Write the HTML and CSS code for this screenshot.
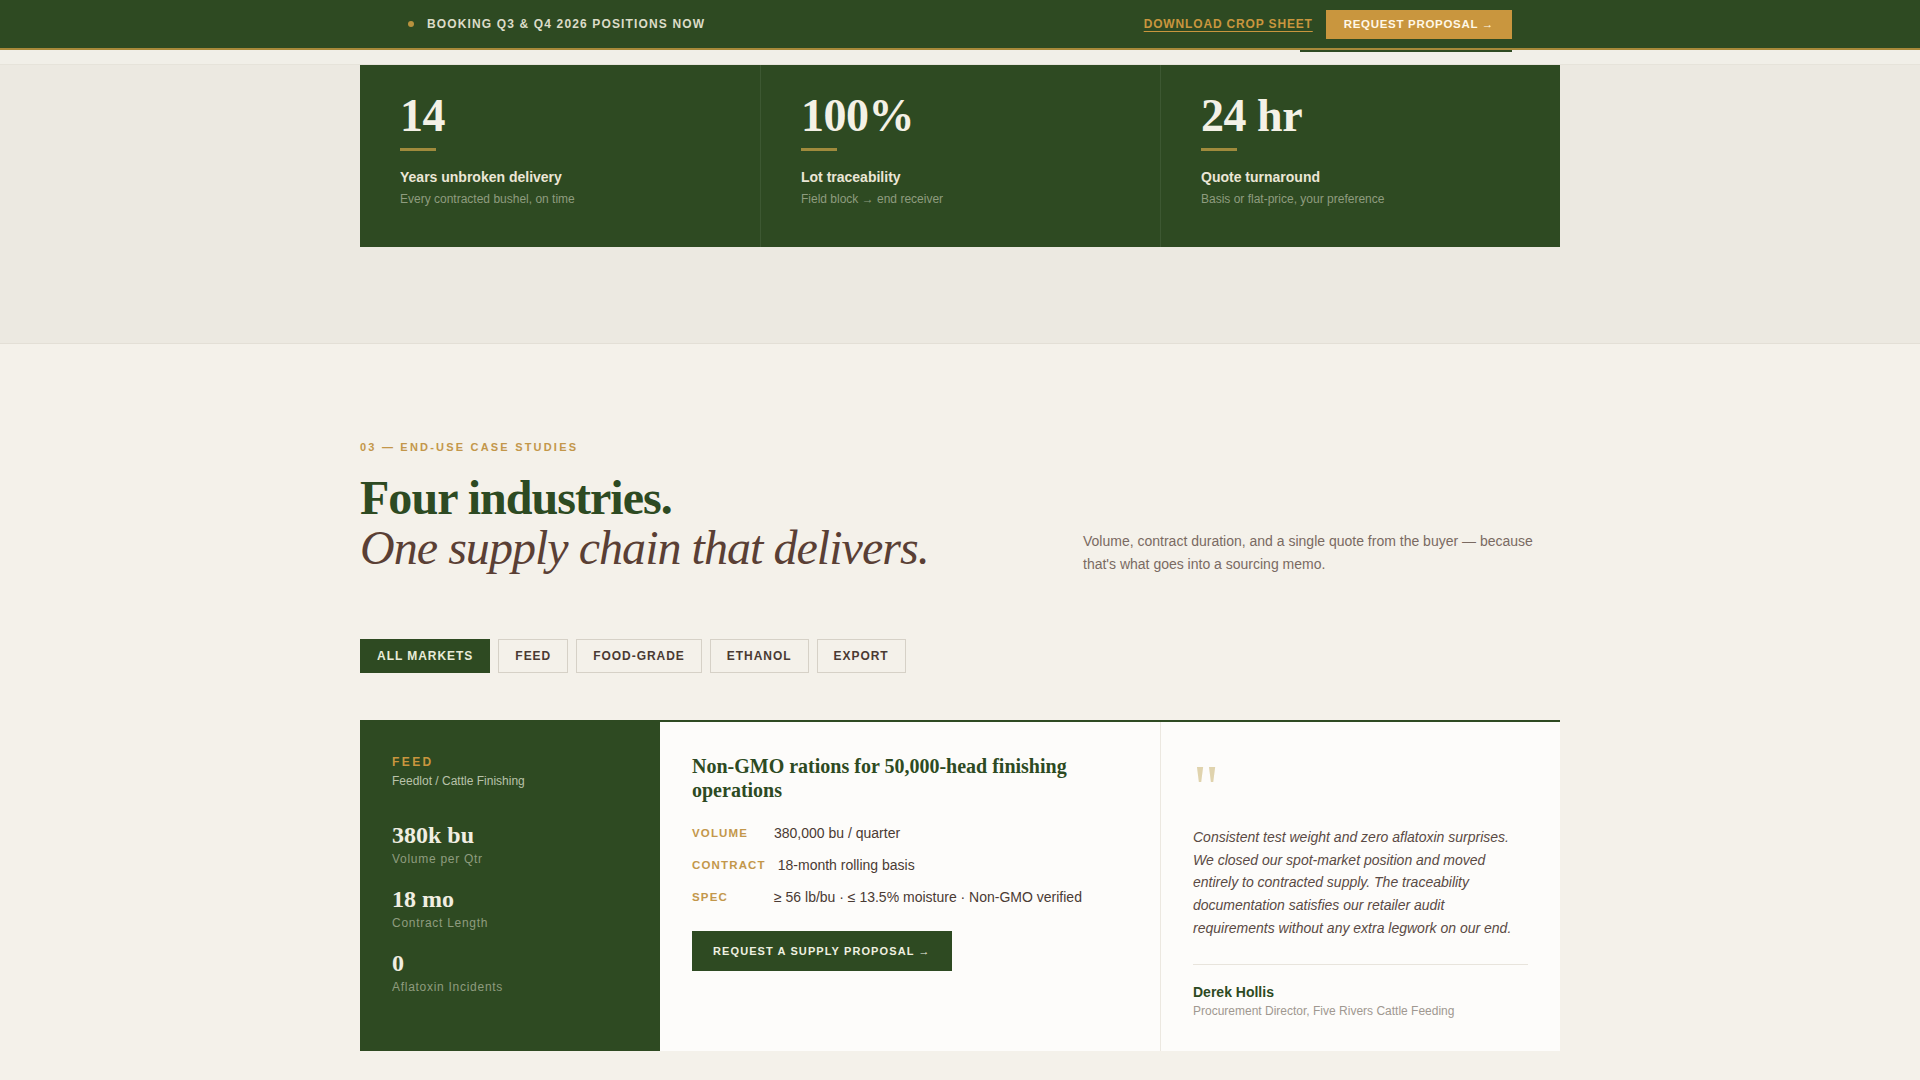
FILE: index.html
```html
<!DOCTYPE html>
<html lang="en">
<head>
<meta charset="utf-8">
<title>Case Studies</title>
<link rel="stylesheet" href="styles.css">
</head>
<body>
<div class="topbar">
  <div class="topbar-inner">
    <div class="announce"><span class="dot"></span>BOOKING Q3 &amp; Q4 2026 POSITIONS NOW</div>
    <div class="top-actions">
      <a class="dl-link" href="#">DOWNLOAD CROP SHEET</a>
      <a class="btn-gold" href="#">REQUEST PROPOSAL →</a>
    </div>
  </div>
</div>
<div class="header-strip">
  <div class="strip-inner"><span class="nav-active"></span></div>
</div>

<section class="stats">
  <div class="stats-grid">
    <div class="stat">
      <div class="stat-num">14</div>
      <div class="stat-rule"></div>
      <div class="stat-label">Years unbroken delivery</div>
      <div class="stat-sub">Every contracted bushel, on time</div>
    </div>
    <div class="stat">
      <div class="stat-num">100%</div>
      <div class="stat-rule"></div>
      <div class="stat-label">Lot traceability</div>
      <div class="stat-sub">Field block → end receiver</div>
    </div>
    <div class="stat">
      <div class="stat-num">24 hr</div>
      <div class="stat-rule"></div>
      <div class="stat-label">Quote turnaround</div>
      <div class="stat-sub">Basis or flat-price, your preference</div>
    </div>
  </div>
</section>

<section class="cases">
  <div class="container">
    <div class="cases-head">
      <div class="head-left">
        <div class="eyebrow">03 — END-USE CASE STUDIES</div>
        <h2 class="title"><span class="title-a">Four industries.</span><br><em class="title-b">One supply chain that delivers.</em></h2>
      </div>
      <p class="head-copy">Volume, contract duration, and a single quote from the buyer — because that's what goes into a sourcing memo.</p>
    </div>

    <div class="filters">
      <button class="chip chip-active">ALL MARKETS</button>
      <button class="chip">FEED</button>
      <button class="chip">FOOD-GRADE</button>
      <button class="chip">ETHANOL</button>
      <button class="chip">EXPORT</button>
    </div>

    <article class="case">
      <div class="case-side">
        <div class="case-tag">FEED</div>
        <div class="case-seg">Feedlot / Cattle Finishing</div>
        <div class="kpis">
          <div class="kpi"><div class="kpi-num">380k bu</div><div class="kpi-lbl">Volume per Qtr</div></div>
          <div class="kpi"><div class="kpi-num">18 mo</div><div class="kpi-lbl">Contract Length</div></div>
          <div class="kpi"><div class="kpi-num">0</div><div class="kpi-lbl">Aflatoxin Incidents</div></div>
        </div>
      </div>
      <div class="case-main">
        <h3 class="case-title">Non-GMO rations for 50,000-head finishing operations</h3>
        <div class="specs">
          <div class="spec"><span class="spec-k">VOLUME</span><span class="spec-v">380,000 bu / quarter</span></div>
          <div class="spec"><span class="spec-k">CONTRACT</span><span class="spec-v">18-month rolling basis</span></div>
          <div class="spec"><span class="spec-k">SPEC</span><span class="spec-v">≥ 56 lb/bu · ≤ 13.5% moisture · Non-GMO verified</span></div>
        </div>
        <a class="btn-green" href="#">REQUEST A SUPPLY PROPOSAL →</a>
      </div>
      <div class="case-quote">
        <div class="qmark">"</div>
        <p class="qtext">Consistent test weight and zero aflatoxin surprises. We closed our spot-market position and moved entirely to contracted supply. The traceability documentation satisfies our retailer audit requirements without any extra legwork on our end.</p>
        <div class="qauthor">
          <div class="qname">Derek Hollis</div>
          <div class="qrole">Procurement Director, Five Rivers Cattle Feeding</div>
        </div>
      </div>
    </article>
  </div>
</section>
</body>
</html>
```

FILE: styles.css
```css
* { box-sizing: border-box; }
html, body { margin: 0; padding: 0; }
body {
  background: #f4f1ea;
  font-family: "Liberation Sans", Arial, sans-serif;
  color: #4a3a33;
}
a { text-decoration: none; }

.topbar {
  background: #2e4a22;
  border-bottom: 2px solid #a8893a;
}
.topbar-inner {
  width: 1200px;
  margin: 0 auto;
  padding: 0 48px;
  height: 48px;
  display: flex;
  align-items: center;
  justify-content: space-between;
}
.announce {
  display: flex;
  align-items: center;
  gap: 13px;
  font-size: 12px;
  font-weight: 700;
  letter-spacing: 0.095em;
  color: #dcdcc8;
}
.dot {
  width: 6px;
  height: 6px;
  border-radius: 50%;
  background: #b8923e;
}
.top-actions {
  display: flex;
  align-items: center;
  gap: 13px;
}
.dl-link {
  font-size: 12px;
  font-weight: 700;
  letter-spacing: 0.07em;
  color: #c9963e;
  text-decoration: underline;
  text-underline-offset: 3px;
  text-decoration-thickness: 1px;
}
.btn-gold {
  background: #c9963e;
  color: #fff8e8;
  font-size: 11.5px;
  font-weight: 700;
  letter-spacing: 0.06em;
  height: 29px;
  padding: 0 18px;
  display: flex;
  align-items: center;
}

.header-strip {
  background: #f1efe8;
  height: 15px;
  border-bottom: 1px solid #e6e3da;
}
.strip-inner {
  width: 1200px;
  margin: 0 auto;
  padding: 0 48px;
  display: flex;
  justify-content: flex-end;
}
.nav-active {
  width: 212px;
  height: 2px;
  background: #2e4a22;
}

.stats {
  background: #ece9e1;
  padding-bottom: 96px;
  border-bottom: 1px solid #e3dfd6;
}
.stats-grid {
  width: 1200px;
  margin: 0 auto;
  display: grid;
  grid-template-columns: repeat(3, 1fr);
  background: #2e4a22;
}
.stat {
  padding: 28px 40px 34px;
  height: 182px;
  border-left: 1px solid #3d5832;
}
.stat:first-child { border-left: none; }
.stat-num {
  font-family: "Liberation Serif", "Times New Roman", serif;
  font-weight: 700;
  font-size: 46px;
  line-height: 1;
  letter-spacing: -0.01em;
  color: #f4f1e6;
}
.stat-rule {
  width: 36px;
  height: 3px;
  background: #a08a3c;
  margin: 9px 0 17px;
}
.stat-label {
  font-size: 14px;
  font-weight: 700;
  color: #ebe6d6;
  line-height: 18px;
}
.stat-sub {
  font-size: 12px;
  color: #8e9c7f;
  margin-top: 6px;
}

.container {
  width: 1200px;
  margin: 0 auto;
}
.cases {
  padding-top: 97px;
  padding-bottom: 40px;
}
.cases-head {
  display: flex;
  justify-content: space-between;
  align-items: flex-end;
}
.eyebrow {
  font-size: 11px;
  font-weight: 700;
  letter-spacing: 0.2em;
  color: #c3974a;
  margin-bottom: 20px;
}
.title {
  margin: 0;
  font-family: "Liberation Serif", "Times New Roman", serif;
  font-size: 48px;
  line-height: 50px;
  font-weight: 400;
}
.title-a {
  font-weight: 700;
  color: #2d4a22;
  letter-spacing: -0.02em;
}
.title-b {
  font-style: italic;
  color: #5a3f35;
  letter-spacing: -0.02em;
}
.head-copy {
  margin: 0 0 -3px;
  width: 477px;
  font-size: 14px;
  line-height: 23px;
  color: #7a6a62;
}

.filters {
  display: flex;
  gap: 8px;
  margin-top: 66px;
}
.chip {
  font-family: "Liberation Sans", Arial, sans-serif;
  font-size: 12px;
  font-weight: 700;
  letter-spacing: 0.08em;
  height: 34px;
  padding: 0 16px;
  background: transparent;
  border: 1px solid #d6d1c7;
  color: #4a3a33;
  border-radius: 0;
}
.chip-active {
  background: #2e4a22;
  border-color: #2e4a22;
  color: #e8ecd8;
  padding: 0 16px;
}

.case {
  margin-top: 47px;
  border-top: 2px solid #2e4a22;
  display: grid;
  grid-template-columns: 300px 500px 400px;
  min-height: 331px;
}
.case-side {
  background: #2e4a22;
  padding: 32px;
}
.case-tag {
  font-size: 12px;
  font-weight: 700;
  letter-spacing: 0.2em;
  color: #c9963e;
  line-height: 16px;
}
.case-seg {
  font-size: 12px;
  color: #b9c2aa;
  margin-top: 3px;
  line-height: 16px;
}
.kpis {
  margin-top: 32px;
  display: flex;
  flex-direction: column;
  gap: 18px;
}
.kpi-num {
  font-family: "Liberation Serif", "Times New Roman", serif;
  font-weight: 700;
  font-size: 24px;
  line-height: 28px;
  color: #f1eee2;
}
.kpi-lbl {
  font-size: 12px;
  letter-spacing: 0.06em;
  color: #8e9c7f;
  line-height: 16px;
  margin-top: 2px;
}

.case-main {
  background: #fdfcfa;
  padding: 32px;
}
.case-title {
  margin: 0;
  font-family: "Liberation Serif", "Times New Roman", serif;
  font-weight: 700;
  font-size: 20px;
  line-height: 24px;
  color: #2d4a22;
}
.specs {
  margin-top: 21px;
  display: flex;
  flex-direction: column;
  gap: 12px;
}
.spec {
  display: flex;
  align-items: center;
  gap: 12px;
  height: 20px;
}
.spec-k {
  min-width: 70px;
  font-size: 11.5px;
  font-weight: 700;
  letter-spacing: 0.1em;
  color: #c3974a;
  line-height: 20px;
}
.spec-v {
  font-size: 14px;
  color: #4a3a33;
  line-height: 20px;
}
.btn-green {
  margin-top: 24px;
  display: inline-flex;
  align-items: center;
  height: 40px;
  padding: 0 21px;
  background: #2e4a22;
  color: #eef0e0;
  font-size: 11px;
  font-weight: 700;
  letter-spacing: 0.1em;
}

.case-quote {
  background: #fdfcfa;
  border-left: 1px solid #ece8e0;
  padding: 41px 32px 32px;
}
.qmark {
  font-family: "Liberation Serif", "Times New Roman", serif;
  font-size: 64px;
  line-height: 50px;
  height: 44px;
  color: #e0d3ad;
}
.qtext {
  margin: 19px 0 0;
  font-style: italic;
  font-size: 14px;
  line-height: 22.7px;
  color: #5a4a44;
}
.qauthor {
  margin-top: 24px;
  border-top: 1px solid #e8e4dc;
  padding-top: 18px;
}
.qname {
  font-size: 14px;
  font-weight: 700;
  color: #2d4a22;
  line-height: 18px;
}
.qrole {
  font-size: 12px;
  color: #a09890;
  margin-top: 3px;
}
```
